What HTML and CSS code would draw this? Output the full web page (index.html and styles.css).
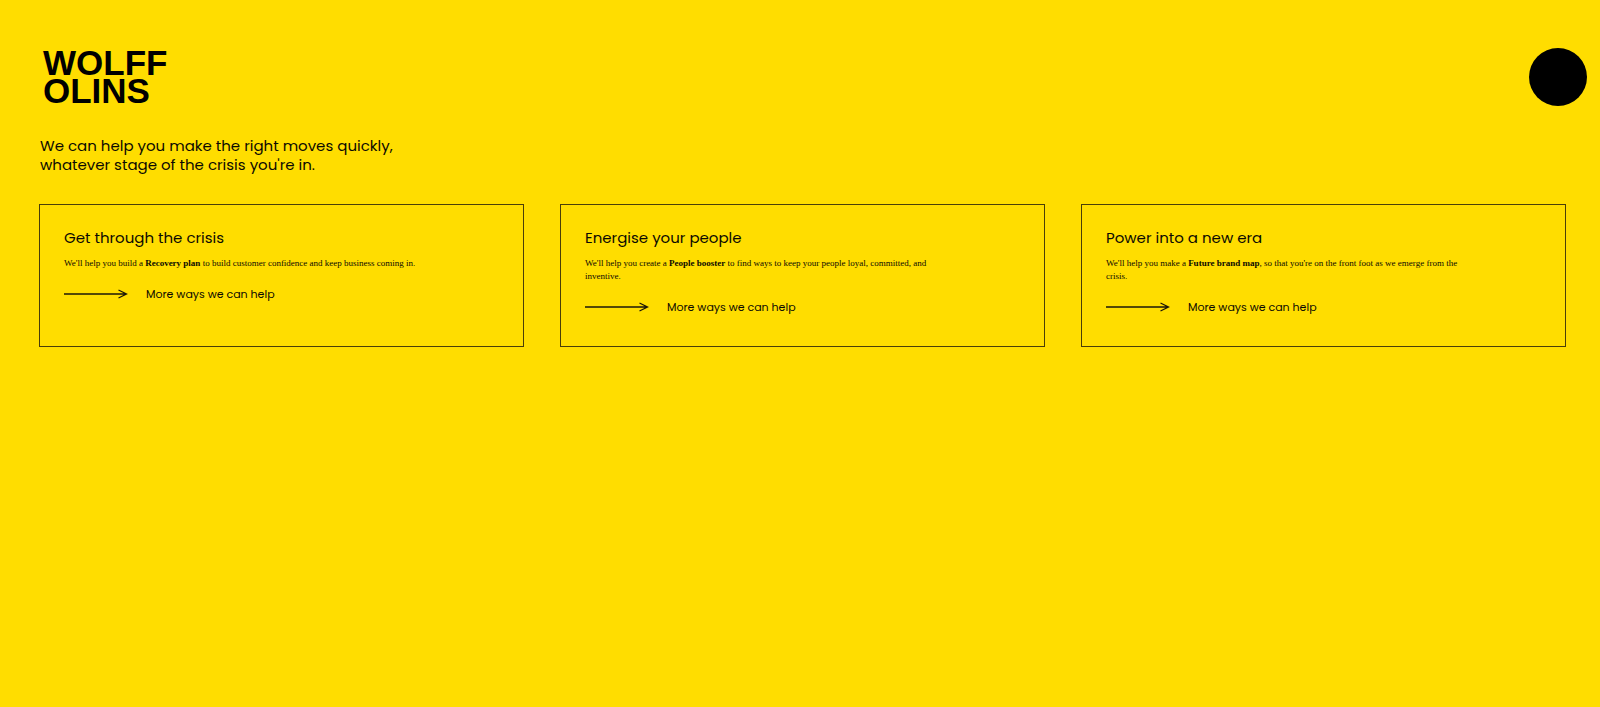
FILE: index.html
```html
<!DOCTYPE html>
<html lang="en">
<head>
<meta charset="utf-8">
<title>Wolff Olins</title>
<meta name="viewport" content="width=device-width, initial-scale=1">
<link rel="stylesheet" href="styles.css">
</head>
<body>
<header class="header">
  <a class="logo" href="#">WOLFF<br>OLINS</a>
  <button class="menu" type="button" aria-label="Menu"></button>
</header>
<main class="main">
  <h1 class="intro">We can help you make the right moves quickly, whatever stage of the crisis you're in.</h1>
  <div class="cards">
    <section class="card">
      <h2 class="title">Get through the crisis</h2>
      <p class="text">We'll help you build a <strong>Recovery plan</strong> to build customer confidence and keep business coming in.</p>
      <a class="more" href="#"><svg class="arrow" viewBox="0 0 64 10" aria-hidden="true"><path d="M0 5H62M54.500 1L62.500 5L54.500 9"/></svg>More ways we can help</a>
    </section>
    <section class="card">
      <h2 class="title">Energise your people</h2>
      <p class="text">We'll help you create a <strong>People booster</strong> to find ways to keep your people loyal, committed, and inventive.</p>
      <a class="more" href="#"><svg class="arrow" viewBox="0 0 64 10" aria-hidden="true"><path d="M0 5H62M54.500 1L62.500 5L54.500 9"/></svg>More ways we can help</a>
    </section>
    <section class="card">
      <h2 class="title">Power into a new era</h2>
      <p class="text">We'll help you make a <strong>Future brand map</strong>, so that you're on the front foot as we emerge from the crisis.</p>
      <a class="more" href="#"><svg class="arrow" viewBox="0 0 64 10" aria-hidden="true"><path d="M0 5H62M54.500 1L62.500 5L54.500 9"/></svg>More ways we can help</a>
    </section>
  </div>
</main>
</body>
</html>
```
FILE: styles.css
```css
* {
  box-sizing: border-box;
}

body {
  margin: 0;
  background: #ffdd00;
  color: #0c0a02;
  font-family: Poppins, Inter, sans-serif;
}

a {
  color: inherit;
  text-decoration: none;
}

.header {
  display: flex;
  justify-content: space-between;
  align-items: flex-start;
  padding: 48px 13px 0 43px;
}

.logo {
  padding-top: 1px;
  color: #000;
  font-family: "Liberation Sans", Arial, sans-serif;
  font-size: 35px;
  font-weight: 700;
  line-height: 28px;
}

.menu {
  width: 58px;
  height: 58px;
  padding: 0;
  border: 0;
  border-radius: 50%;
  background: #000;
  cursor: pointer;
}

.main {
  padding: 30px 34px 0 39px;
}

.intro {
  max-width: 370px;
  margin: 0 0 30px;
  padding-left: 1px;
  font-size: 15px;
  font-weight: 400;
  line-height: 19px;
}

.cards {
  display: grid;
  grid-template-columns: repeat(3, minmax(0, 1fr));
  gap: 36px;
}

.card {
  padding: 23px 24px 29px;
  border: 1px solid #4a3e08;
}

.title {
  margin: 0 0 10px;
  font-size: 15px;
  font-weight: 400;
  line-height: 19px;
}

.text {
  max-width: 352px;
  margin: 0 0 14px;
  font-family: "Liberation Serif", serif;
  font-size: 9px;
  line-height: 13px;
}

.more {
  display: flex;
  align-items: center;
  gap: 18px;
  font-size: 11px;
  font-weight: 400;
  line-height: 20px;
}

.arrow {
  width: 64px;
  height: 10px;
  fill: none;
  stroke: #1c1708;
  stroke-width: 1.3;
}
```
